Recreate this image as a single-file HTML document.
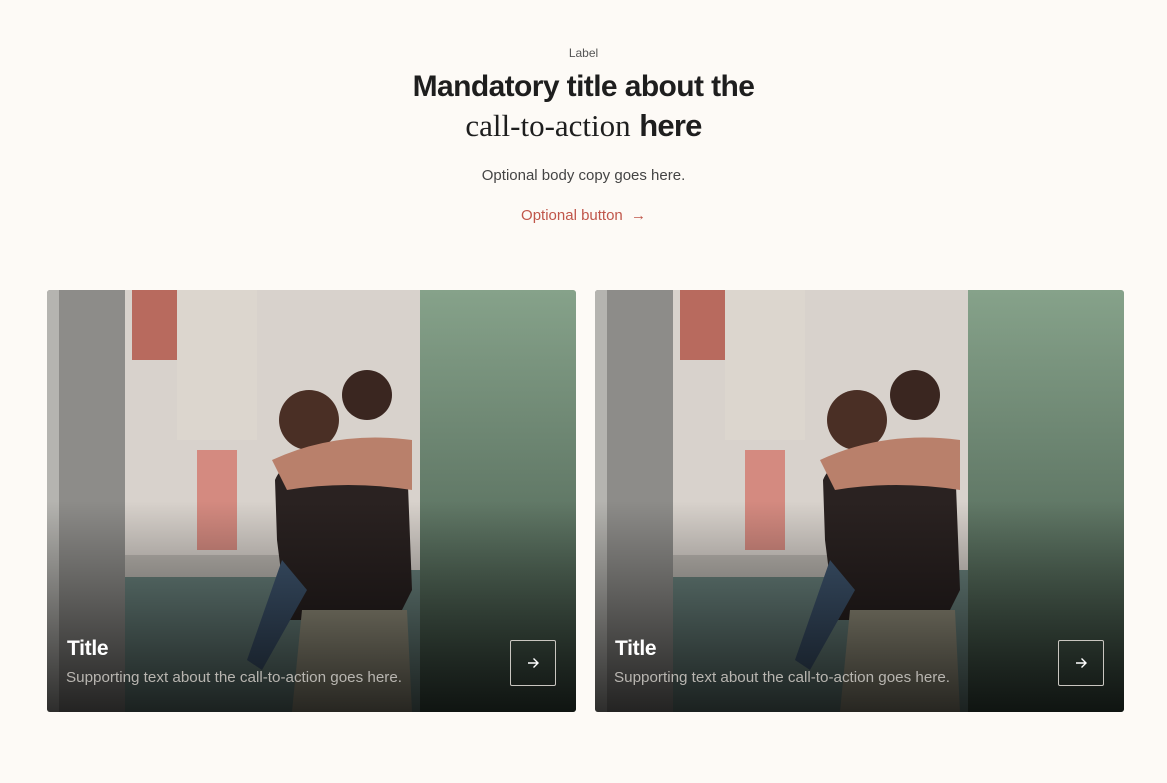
<!DOCTYPE html>
<html><head><meta charset="utf-8"><style>
*{margin:0;padding:0;box-sizing:border-box}
body{width:1167px;height:783px;background:#fdfaf6;font-family:"Liberation Sans",sans-serif;position:relative;overflow:hidden}
.c{position:absolute;left:0;width:1167px;text-align:center}
.card{position:absolute;top:290px;width:529px;height:422px;border-radius:3px;overflow:hidden}
.card svg{position:absolute;left:0;top:0}
.t{position:absolute;left:20px;top:347px;color:#fff;font-size:21px;font-weight:bold;letter-spacing:-0.3px}
.s{position:absolute;left:19px;top:379px;color:#b8b5b0;font-size:15.2px}
.b{position:absolute;left:463px;top:350px;width:46px;height:46px;border:1px solid #c9c6c0;border-radius:2px}
.b svg{left:15px;top:15px}
</style></head><body>
<div class="c" style="top:46px;font-size:12px;color:#555">Label</div>
<div class="c" style="top:70px;font-size:30px;font-weight:bold;color:#1e1e1e;letter-spacing:-0.6px">Mandatory title about the</div>
<div class="c" style="top:108px;font-size:31px;color:#1e1e1e"><span style="font-family:'Liberation Serif',serif">call-to-action</span> <b style="letter-spacing:-0.8px">here</b></div>
<div class="c" style="top:167px;font-size:15px;color:#444">Optional body copy goes here.</div>
<div class="c" style="top:207px;font-size:15px;color:#c0564a">Optional button <span style="margin-left:4px">→</span></div>

<div class="card" style="left:47px"><svg width="529" height="422">
<defs><linearGradient id="g" x1="0" y1="0" x2="0" y2="1"><stop offset="0.5" stop-color="#000" stop-opacity="0"/><stop offset="1" stop-color="#000" stop-opacity="0.75"/></linearGradient>
<linearGradient id="gr" x1="0" y1="0" x2="0" y2="1"><stop offset="0" stop-color="#86a28a"/><stop offset="1" stop-color="#3e5145"/></linearGradient></defs>
<rect width="529" height="422" fill="#d8d2cc"/>
<rect x="75" y="280" width="300" height="142" fill="#6b847f"/>
<rect x="75" y="265" width="230" height="22" fill="#bcb8b2"/>
<rect x="130" y="0" width="80" height="150" fill="#dcd6ce"/>
<rect x="85" y="0" width="45" height="70" fill="#b86a5e"/>
<rect x="150" y="160" width="40" height="100" fill="#d48a80"/>
<rect x="0" y="0" width="78" height="422" fill="#8d8c89"/>
<rect x="0" y="0" width="12" height="422" fill="#b5b4b0"/>
<rect x="373" y="0" width="156" height="422" fill="url(#gr)"/>
<path d="M228 190 Q240 160 300 170 L360 170 L365 300 L350 330 L240 330 L230 250 Z" fill="#2a2221"/>
<circle cx="262" cy="130" r="30" fill="#4a2f25"/>
<circle cx="320" cy="105" r="25" fill="#3a2620"/>
<path d="M225 170 Q290 140 365 150 L365 200 Q300 190 240 200 Z" fill="#b9806b"/>
<path d="M255 320 L360 320 L365 422 L245 422 Z" fill="#9c9884"/>
<path d="M235 270 L200 370 L215 380 L260 300 Z" fill="#3f5670"/>
<rect width="529" height="422" fill="url(#g)"/>
</svg>
<div class="t">Title</div><div class="s">Supporting text about the call-to-action goes here.</div>
<div class="b"><svg width="14" height="14" viewBox="0 0 14 14"><path d="M2 7H12M7.5 2.5L12 7L7.5 11.5" stroke="#fff" stroke-width="1.4" fill="none"/></svg></div></div>

<div class="card" style="left:595px"><svg width="529" height="422">
<rect width="529" height="422" fill="#d8d2cc"/>
<rect x="75" y="280" width="300" height="142" fill="#6b847f"/>
<rect x="75" y="265" width="230" height="22" fill="#bcb8b2"/>
<rect x="130" y="0" width="80" height="150" fill="#dcd6ce"/>
<rect x="85" y="0" width="45" height="70" fill="#b86a5e"/>
<rect x="150" y="160" width="40" height="100" fill="#d48a80"/>
<rect x="0" y="0" width="78" height="422" fill="#8d8c89"/>
<rect x="0" y="0" width="12" height="422" fill="#b5b4b0"/>
<rect x="373" y="0" width="156" height="422" fill="url(#gr)"/>
<path d="M228 190 Q240 160 300 170 L360 170 L365 300 L350 330 L240 330 L230 250 Z" fill="#2a2221"/>
<circle cx="262" cy="130" r="30" fill="#4a2f25"/>
<circle cx="320" cy="105" r="25" fill="#3a2620"/>
<path d="M225 170 Q290 140 365 150 L365 200 Q300 190 240 200 Z" fill="#b9806b"/>
<path d="M255 320 L360 320 L365 422 L245 422 Z" fill="#9c9884"/>
<path d="M235 270 L200 370 L215 380 L260 300 Z" fill="#3f5670"/>
<rect width="529" height="422" fill="url(#g)"/>
</svg>
<div class="t">Title</div><div class="s">Supporting text about the call-to-action goes here.</div>
<div class="b"><svg width="14" height="14" viewBox="0 0 14 14"><path d="M2 7H12M7.5 2.5L12 7L7.5 11.5" stroke="#fff" stroke-width="1.4" fill="none"/></svg></div></div>
</body></html>
